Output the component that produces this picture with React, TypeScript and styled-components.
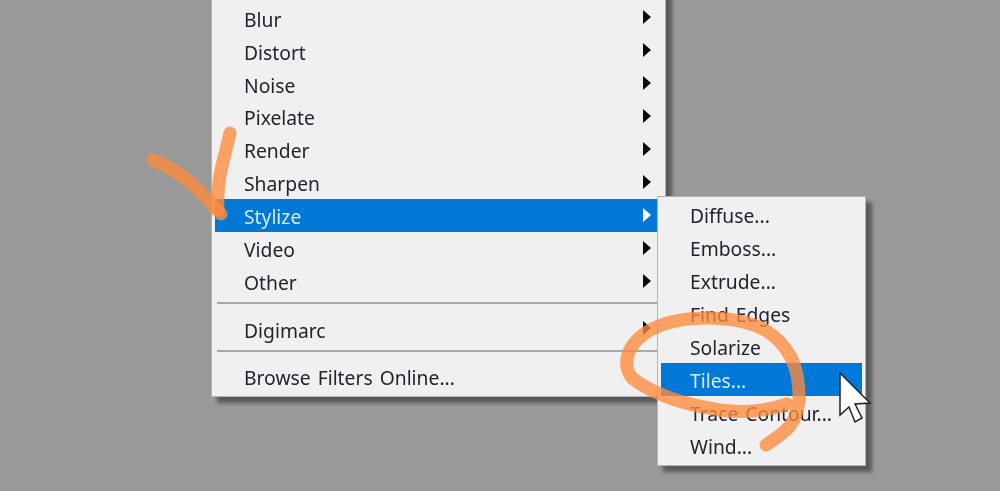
import styled, { createGlobalStyle } from 'styled-components'

const GlobalStyle = createGlobalStyle`
  html, body {
    margin: 0;
    padding: 0;
    background: #999999;
  }
`

const MAIN_ITEMS = ['Blur', 'Distort', 'Noise', 'Pixelate', 'Render', 'Sharpen', 'Stylize', 'Video', 'Other']
const SUB_ITEMS = ['Diffuse...', 'Emboss...', 'Extrude...', 'Find Edges', 'Solarize', 'Tiles...', 'Trace Contour...', 'Wind...']

export default function App() {
  return (
    <>
      <GlobalStyle />
      <Page>
        <MainMenu>
          {MAIN_ITEMS.map((item) => (
            <Row key={item} $active={item === 'Stylize'}>
              <Label>{item}</Label>
              <Arrow $active={item === 'Stylize'} />
            </Row>
          ))}
          <Separator />
          <Row $short>
            <Label>Digimarc</Label>
            <Arrow />
          </Row>
          <Separator />
          <Row $last>
            <Label>Browse Filters Online...</Label>
          </Row>
        </MainMenu>
        <SubMenu>
          {SUB_ITEMS.map((item) => (
            <SubRow key={item} $active={item === 'Tiles...'}>
              <Label>{item}</Label>
            </SubRow>
          ))}
        </SubMenu>
        <Annotations viewBox="0 0 1000 491">
          <path d="M230 133 L221 170 C218 185 217 195 218 210" />
          <path d="M153 160 C170 167 190 180 205 197 L221 214" />
          <path d="M766 445 C785 432 797 425 799 400 C800 370 790 345 765 330 C735 314 680 314 650 330 C625 345 622 365 632 378 C650 392 680 404 720 410 C750 414 770 410 787 404" />
        </Annotations>
        <Cursor viewBox="0 0 1000 491">
          <path d="M840 373 L840 415 L849 407 L855 422 L862 418 L855 404 L870 403 Z" />
        </Cursor>
      </Page>
    </>
  )
}

const Page = styled.div`
  position: relative;
  width: 1000px;
  height: 491px;
  overflow: hidden;
  background: #999999;
  font-family: 'Noto Sans', 'Liberation Sans', sans-serif;
  font-size: 19.3px;
  word-spacing: 2px;
  color: #23232e;
`

const MainMenu = styled.div`
  box-sizing: border-box;
  width: 455px;
  height: 414px;
  margin: -17px 0 0 211px;
  padding: 18px 3px 0;
  background: #f0f0f0;
  border: 1px solid #b4b4b4;
  box-shadow: 6px 6px 4px rgba(0, 0, 0, 0.42);
`

const Row = styled.div<{ $active?: boolean; $short?: boolean; $last?: boolean }>`
  box-sizing: border-box;
  display: flex;
  align-items: center;
  justify-content: space-between;
  height: 32.9px;
  padding: ${(p) => (p.$short || p.$last ? '0' : '2px')} 11px 0 29px;
  margin-top: ${(p) => (p.$short ? '10px' : p.$last ? '9px' : '0')};
  margin-bottom: ${(p) => (p.$short ? '-1px' : '0')};
  background: ${(p) => (p.$active ? '#0078d7' : 'transparent')};
  color: ${(p) => (p.$active ? '#d8eafa' : 'inherit')};
`

const Label = styled.span`
  line-height: 1;
  filter: blur(0.4px);
  white-space: pre;
`

const Arrow = styled.i<{ $active?: boolean }>`
  width: 0;
  height: 0;
  border-style: solid;
  border-width: 7px 0 7px 8px;
  border-color: transparent transparent transparent ${(p) => (p.$active ? '#ffffff' : '#0a0a0a')};
  transform: translateY(-2px);
`

const Separator = styled.div`
  height: 2px;
  margin: 4px 0 0 2px;
  background: #a9a9a9;
`

const SubMenu = styled.div`
  position: absolute;
  left: 657px;
  top: 196px;
  box-sizing: border-box;
  width: 209px;
  height: 270px;
  padding: 2px 3px 0;
  background: #f0f0f0;
  border: 1px solid #b4b4b4;
  box-shadow: 6px 6px 4px rgba(0, 0, 0, 0.42);
`

const SubRow = styled.div<{ $active?: boolean }>`
  box-sizing: border-box;
  display: flex;
  align-items: center;
  height: 32.9px;
  padding: 1px 0 0 29px;
  background: ${(p) => (p.$active ? '#0078d7' : 'transparent')};
  color: ${(p) => (p.$active ? '#d8eafa' : 'inherit')};
`

const Annotations = styled.svg`
  position: absolute;
  inset: 0;
  width: 1000px;
  height: 491px;
  pointer-events: none;
  path {
    fill: none;
    stroke: #ff8a3c;
    stroke-opacity: 0.78;
    stroke-width: 13;
    stroke-linecap: round;
    stroke-linejoin: round;
  }
`

const Cursor = styled.svg`
  position: absolute;
  inset: 0;
  width: 1000px;
  height: 491px;
  pointer-events: none;
  filter: blur(0.4px);
  path {
    fill: #ffffff;
    stroke: #222222;
    stroke-width: 1.5;
  }
`
